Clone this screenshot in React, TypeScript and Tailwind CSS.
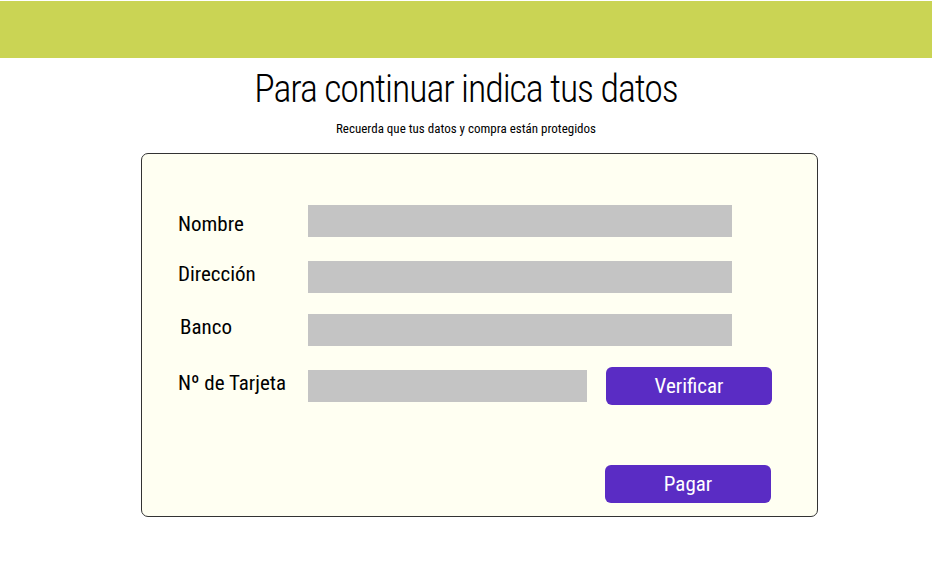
import { useState } from 'react'

const FONT = { fontFamily: '"Roboto Condensed", "DejaVu Sans Condensed", sans-serif' }

export default function App() {
  const [nombre, setNombre] = useState('')
  const [direccion, setDireccion] = useState('')
  const [banco, setBanco] = useState('')
  const [tarjeta, setTarjeta] = useState('')

  const inputCls = 'h-[32px] bg-[#c4c4c4] outline-none px-2 text-[16px] text-black'
  const labelCls = 'w-[130px] text-[21px] leading-[28px]'

  return (
    <div className="min-h-[570px] w-[932px] bg-white text-black" style={FONT}>
      <div className="mt-px h-[57px] bg-[#cad454]" />

      <div className="flex flex-col items-center">
        <h1 className="mt-[9px] text-[38px] leading-[44px] tracking-[-1.1px] font-light">Para continuar indica tus datos</h1>
        <p className="mt-[9px] text-[13px] leading-[18px]">Recuerda que tus datos y compra están protegidos</p>
      </div>

      <div className="ml-[141px] mt-[15px] w-[677px] h-[364px] rounded-[7px] border border-[#333] bg-[#fffff2] pt-[51px] pl-[36px]">
        <div className="flex items-start">
          <span className={`${labelCls} pt-[5px]`}>Nombre</span>
          <input value={nombre} onChange={e => setNombre(e.target.value)} className={`${inputCls} w-[424px]`} />
        </div>
        <div className="flex items-start mt-[23px]">
          <span className={`${labelCls} -mt-[1px]`}>Dirección</span>
          <input value={direccion} onChange={e => setDireccion(e.target.value)} className={`${inputCls} w-[424px]`} />
        </div>
        <div className="flex items-start mt-[21px]">
          <span className={`${labelCls} pl-[2px] -mt-[1px]`}>Banco</span>
          <input value={banco} onChange={e => setBanco(e.target.value)} className={`${inputCls} w-[424px]`} />
        </div>
        <div className="flex items-start mt-[24px]">
          <span className={`${labelCls} -mt-[1px]`}>Nº de Tarjeta</span>
          <input value={tarjeta} onChange={e => setTarjeta(e.target.value)} className={`${inputCls} w-[279px]`} />
          <button type="button" className="ml-[19px] -mt-[3px] w-[166px] h-[38px] rounded-[6px] bg-[#5a2cc4] text-white text-[21px] leading-[28px]">
            Verificar
          </button>
        </div>
        <div className="mt-[60px] pl-[427px]">
          <button type="button" className="w-[166px] h-[38px] rounded-[6px] bg-[#5a2cc4] text-white text-[21px] leading-[28px]">
            Pagar
          </button>
        </div>
      </div>
    </div>
  )
}
